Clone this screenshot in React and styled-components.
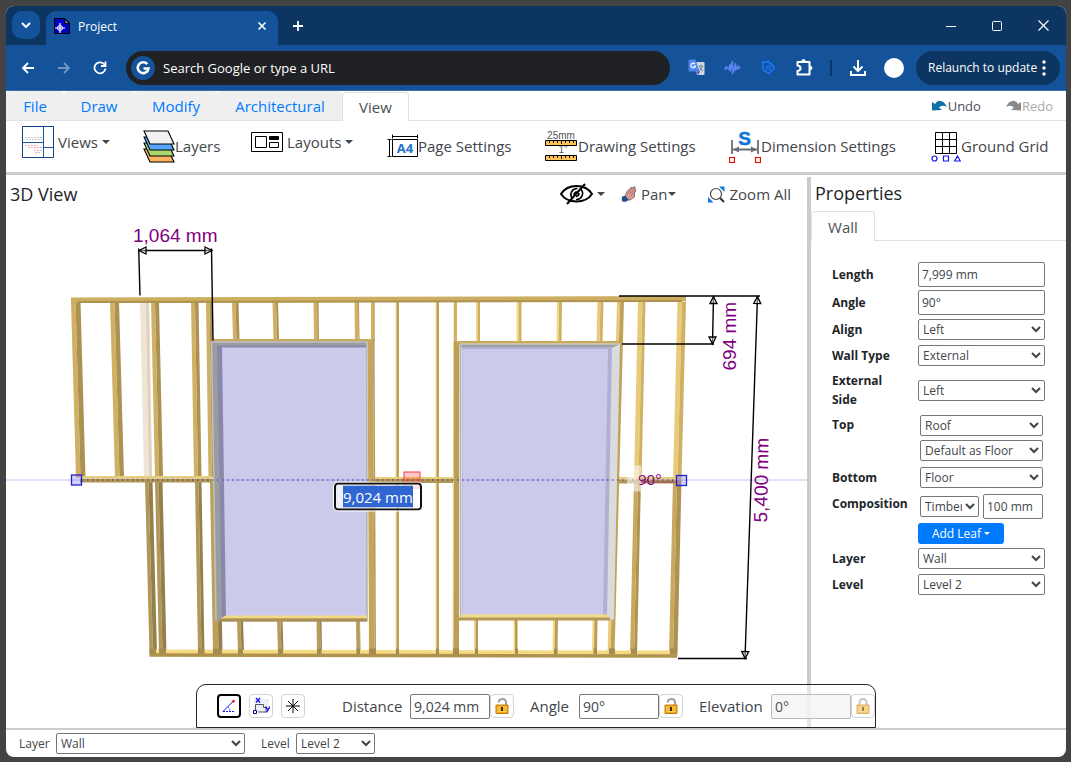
import React from 'react';
import styled, { createGlobalStyle } from 'styled-components';

const Global = createGlobalStyle`
  * { box-sizing: border-box; }
  html, body { margin: 0; background: #434343; }
  body, button, input, select {
    font-family: "Open Sans", "Noto Sans", sans-serif;
    color: #212529;
  }
  button { cursor: pointer; }
  svg { display: block; flex: none; }
`;

/* ---------- window ---------- */

const Page = styled.div`
  min-height: 100vh;
  padding: 6px 5px 5px 6px;
  display: flex;
`;
const Window = styled.div`
  flex: 1;
  min-width: 0;
  display: flex;
  flex-direction: column;
  background: #fff;
  border-radius: 8px;
  overflow: hidden;
`;
const TitleBar = styled.header`
  display: flex;
  align-items: stretch;
  height: 39px;
  background: #0c3561;
`;
const PlainButton = styled.button`
  display: flex;
  align-items: center;
  justify-content: center;
  padding: 0;
  border: 0;
  background: none;
  color: ${(p) => p.$color || '#fff'};
`;
const TabSearch = styled(PlainButton)`
  width: 28px;
  height: 28px;
  margin: 5px 6px 0 6px;
  border-radius: 10px;
  background: #14539a;
`;
const BrowserTab = styled.div`
  display: flex;
  align-items: center;
  width: 232px;
  margin-top: 5px;
  padding: 0 8px 4px;
  gap: 8px;
  border-radius: 10px 10px 0 0;
  background: #14539a;
  color: #fff;
  font-size: 12px;
`;
const TabTitle = styled.span`
  flex: 1;
`;
const WindowButtons = styled.div`
  display: flex;
  margin-left: auto;
  button { width: 46px; }
`;
const AddressRow = styled.div`
  display: flex;
  align-items: center;
  height: 46px;
  padding: 0 6px 0 4px;
  background: #14539a;
  border-bottom: 1px solid #3a6ea9;
`;
const NavButton = styled(PlainButton)`
  width: 36px;
  height: 34px;
`;
const NewTab = styled(PlainButton)`
  width: 40px;
`;
const Omnibox = styled.label`
  display: flex;
  align-items: center;
  flex: 1;
  height: 34px;
  margin: 0 8px 0 8px;
  padding: 0 5px;
  gap: 8px;
  border-radius: 17px;
  background: #202124;
`;
const OmniInput = styled.input`
  flex: 1;
  min-width: 0;
  padding: 0;
  border: 0;
  outline: 0;
  background: none;
  color: #fff;
  font-size: 13px;
  &::placeholder { color: #fff; opacity: 1; }
`;
const Divider = styled.span`
  width: 2px;
  height: 16px;
  margin: 0 8px;
  background: #0c3561;
`;
const Avatar = styled.button`
  width: 20px;
  height: 20px;
  margin: 0 12px 0 8px;
  padding: 0;
  border: 0;
  border-radius: 50%;
  background: #fff;
`;
const Relaunch = styled.button`
  display: flex;
  align-items: center;
  justify-content: space-between;
  width: 144px;
  height: 34px;
  padding: 0 14px 0 12px;
  border: 0;
  border-radius: 17px;
  background: #0c3561;
  color: #fff;
  font-size: 12px;
  white-space: nowrap;
`;

/* ---------- application menus ---------- */

const MenuTabs = styled.nav`
  display: flex;
  height: 30px;
  border-bottom: 1px solid #dee2e6;
`;
const MenuTab = styled.a`
  display: flex;
  align-items: center;
  justify-content: center;
  width: ${(p) => p.$w}px;
  height: ${(p) => (p.$active ? 29 : 29)}px;
  height: 29px;
  margin-top: ${(p) => (p.$active ? 1 : 0)}px;
  border: ${(p) => (p.$active ? '1px solid #dee2e6' : '0')};
  border-bottom: 0;
  border-radius: 4px 4px 0 0;
  background: ${(p) => (p.$active ? '#fff' : '#efefef')};
  color: ${(p) => (p.$active ? '#495057' : '#007bff')};
  font-size: 15px;
  text-decoration: none;
`;
const History = styled.div`
  display: flex;
  align-items: center;
  gap: 25px;
  margin-left: auto;
  padding-right: 13px;
`;
const HistoryButton = styled(PlainButton)`
  gap: 1px;
  color: #495057;
  font-size: 13px;
  &:disabled { color: #aaa; }
`;
const Ribbon = styled.div`
  display: flex;
  gap: 32px;
  height: 54px;
  padding: 0 16px;
  border-bottom: 3px solid #ccc;
`;
const RibbonButton = styled(PlainButton)`
  justify-content: flex-start;
  width: ${(p) => p.$w}px;
  height: ${(p) => (p.$menu ? 42 : 50)}px;
  gap: ${(p) => p.$gap || 0}px;
  color: #41464b;
  font-size: 15px;
  white-space: nowrap;
`;
const Caret = styled.span`
  display: inline-block;
  margin-left: ${(p) => p.$gap || 0}px;
  border-top: ${(p) => p.$size || 4}px solid currentColor;
  border-left: ${(p) => p.$size || 4}px solid transparent;
  border-right: ${(p) => p.$size || 4}px solid transparent;
`;

/* ---------- workspace ---------- */

const Workspace = styled.main`
  position: relative;
  flex: 1;
  display: grid;
  grid-template-columns: minmax(0, 1fr) 259px;
  padding-top: 2px;
  border-bottom: 2px solid #ccc;
`;
const ViewPane = styled.section`
  display: flex;
  flex-direction: column;
  min-width: 0;
`;
const ViewBar = styled.div`
  display: flex;
  align-items: center;
  height: 34px;
  padding: 0 16px 0 4px;
`;
const Heading = styled.h2`
  margin: 0;
  font-size: 18px;
  font-weight: 500;
  line-height: 32px;
`;
const ViewTools = styled.div`
  display: flex;
  gap: 16px;
  margin-left: auto;
`;
const ViewButton = styled(PlainButton)`
  gap: ${(p) => p.$gap || 4}px;
  color: #41464b;
  font-size: 15px;
  &:last-child { margin-left: 16px; }
`;
const Canvas = styled.svg`
  flex: 1 1 516px;
  width: 100%;
  min-height: 0;
`;
const InlineValue = styled.input`
  display: block;
  width: 88px;
  height: 28px;
  margin: 1px;
  padding: 1px 7px;
  border: 2px solid #101010;
  border-radius: 4px;
  outline: 1px solid #fff;
  background: linear-gradient(#2f66d0, #2f66d0) content-box, rgba(255, 255, 255, 0.7);
  color: #fff;
  font-size: 15px;
`;

const Properties = styled.aside`
  border-left: 4px solid #ccc;
`;
const PanelHeading = styled(Heading)`
  padding: 0 0 2px 4px;
`;
const PanelTabs = styled.div`
  display: flex;
  height: 30px;
  border-bottom: 1px solid #dee2e6;
`;
const PanelTab = styled.button`
  width: 64px;
  height: 30px;
  padding: 0;
  border: 1px solid #dee2e6;
  border-bottom: 0;
  border-radius: 4px 4px 0 0;
  background: #fff;
  color: #495057;
  font-size: 15px;
`;
const Form = styled.form`
  display: flex;
  flex-direction: column;
  gap: 3px;
  padding: 21px 21px 0 21px;
`;
const Row = styled.div`
  display: grid;
  grid-template-columns: 86px minmax(0, 1fr);
  align-items: ${(p) => (p.$top ? 'start' : 'center')};
  padding: ${(p) => p.$pad || '1px 0'};
`;
const Label = styled.label`
  color: #212529;
  font-size: 12px;
  font-weight: 700;
  line-height: 19px;
`;
const Stack = styled.div`
  display: flex;
  flex-direction: column;
  gap: 4px;
  padding: 0 2px;
`;
const Pair = styled.div`
  display: grid;
  grid-template-columns: 59px 60px;
  align-items: center;
  gap: 4px;
`;
const TextBox = styled.input`
  width: ${(p) => (p.$w ? `${p.$w}px` : '100%')};
  height: 25px;
  padding: 0 3px;
  border: 1px solid #767676;
  border-radius: 2px;
  background: #fff;
  color: #41464b;
  font-size: ${(p) => p.$size || 12}px;
  &:disabled { border-color: #bbb; background: #f4f4f4cc; color: #555; }
`;
const Select = styled.select`
  width: ${(p) => (p.$w ? `${p.$w}px` : '100%')};
  height: 21px;
  padding: 0;
  border: 1px solid #767676;
  border-radius: 2px;
  background-color: #fff;
  color: #41464b;
  font-size: 12px;
`;
const AddLeaf = styled.button`
  display: flex;
  align-items: center;
  justify-content: center;
  width: 86px;
  height: 21px;
  margin-left: -2px;
  padding: 0;
  border: 0;
  border-radius: 3px;
  background: #007bff;
  color: #fff;
  font-size: 12px;
`;

const InputPanel = styled.div`
  position: absolute;
  left: 190px;
  bottom: 0;
  display: flex;
  align-items: center;
  height: 44px;
  padding: 0 0 0 20px;
  border: 1px solid #212529;
  border-radius: 10px 10px 0 0;
  background: rgba(255, 255, 255, 0.5);
`;
const ModeGroup = styled.div`
  display: flex;
  gap: 8px;
  margin-right: 37px;
`;
const IconButton = styled(PlainButton)`
  width: 24px;
  height: 24px;
  border: ${(p) => (p.$active ? '2px solid #000' : '1px solid #d3d3d3')};
  border-radius: 4px;
  background: #fff;
`;
const Field = styled.div`
  display: flex;
  align-items: center;
  width: ${(p) => p.$w}px;
  margin-left: ${(p) => p.$gap || 0}px;
  font-size: 15px;
  color: #41464b;
  label { flex: 1; }
  svg { opacity: ${(p) => (p.$off ? 0.6 : 1)}; }
`;
const StatusBar = styled.footer`
  display: flex;
  align-items: center;
  height: 27px;
  padding: 0 13px;
  color: #41464b;
  font-size: 12px;
  label { width: 37px; }
  label + select { margin-right: 16px; }
  select + label { width: 35px; }
`;

/* ---------- icons ---------- */

const Stroke = ({ w, h, d, sw = 2, color = 'currentColor' }) => (
  <svg width={w} height={h} viewBox={`0 0 ${w} ${h}`} fill="none" stroke={color} strokeWidth={sw}>
    <path d={d} />
  </svg>
);

const FavIcon = () => (
  <svg width="16" height="16" viewBox="0 0 16 16">
    <path d="M.5.5h10.500l4.500 4.500v10.500H.5z" fill="#0202c8" stroke="#000" />
    <path d="M11 1v4.500h4z" fill="#8c8c8c" stroke="#000" strokeWidth=".8" />
    <circle cx="6" cy="10" r="2.500" fill="none" stroke="#fff" />
    <path d="M6 5v10M1 10h10" stroke="#fff" strokeWidth="1.200" />
  </svg>
);
const GoogleMark = () => (
  <svg width="24" height="24" viewBox="0 0 24 24">
    <circle cx="12" cy="12" r="12" fill="#14539a" />
    <path d="M16.300 8.200A5.400 5.400 0 1 0 17.500 12.500H12.500" fill="none" stroke="#fff" strokeWidth="2.600" />
  </svg>
);
const TranslateIcon = () => (
  <svg width="17" height="17" viewBox="0 0 17 17">
    <path d="M7 3h8.500q1 0 1 1v11q0 1-1 1H9z" fill="#cfd6df" />
    <path d="M11 7h4M13 6v1M14.500 7q-1 4-4 5M11.500 8q1 3 3.500 4" stroke="#71808f" fill="none" />
    <path d="M1.500.5h6l4 12h-10q-1 0-1-1v-10q0-1 1-1z" fill="#4f86ee" />
    <path d="M9 12.500h3l-2 3.500z" fill="#4338b8" />
    <path d="M7 5a2.300 2.300 0 1 0 .5 2H5.400" fill="none" stroke="#fff" strokeWidth="1.200" />
  </svg>
);
const WaveIcon = () => (
  <svg width="17" height="15" viewBox="0 0 17 15" fill="none" stroke="#5b82ee" strokeWidth="1.500" strokeLinecap="round" strokeLinejoin="round">
    <path d="M1 9.500Q2 5 3 7.500T5 8.500L6 4.500V11L8.500 1.500V13.500L11.500 3.500V10.500L14 5.500V9L16 7" />
  </svg>
);
const TagIcon = () => (
  <svg width="15" height="15" viewBox="0 0 15 15" fill="none" stroke="#1a73f0">
    <path d="M1.500 2.500L7.500 1.500 13.500 7.500 8 13.500 2.500 10z" strokeWidth="1.800" strokeLinejoin="round" />
    <circle cx="7.500" cy="7.500" r="1.800" strokeWidth="1.400" />
  </svg>
);
const PuzzleIcon = () => (
  <svg width="17" height="17" viewBox="0 0 17 17">
    <path d="M1.500 3H13.500V15.500H1.500V12Q4.500 11.500 4.500 9.200T1.500 6.500Z" fill="none" stroke="#fff" strokeWidth="2" strokeLinejoin="round" />
    <path d="M5.500 3a2 2.500 0 0 1 4 0zM13.500 7a2.500 2 0 0 1 0 4z" fill="#fff" stroke="#fff" />
  </svg>
);
const ViewsIcon = () => (
  <svg width="32" height="32" viewBox="0 0 32 32" fill="none">
    <path d="M.5.5h31v31H.5zM21.500 0v32M0 16.500h21M21.500 21.500H32" stroke="#1c57a5" />
    <path d="M.5.5h31v31H.5z" stroke="#0b2f6b" strokeDasharray="1 1" />
    <path d="M3 11.500h17M4 13.500h16" stroke="#c5c9b8" strokeDasharray="2 1" />
    <path d="M3 19.500h13M6 21.500h14M12 24.500h8M13 26.500h6" stroke="#f2aab5" strokeDasharray="2 1" />
  </svg>
);
const LayersIcon = () => (
  <svg width="32" height="33" viewBox="0 0 32 33" stroke="#000" strokeWidth="1.100">
    {[['#fdb35f', 18], ['#a9d66e', 12], ['#55a5f8', 6], ['#f0f0f0', 0]].map(([c, y]) => (
      <path key={c} d={`M1 ${y + 1}h24l6 13H7z`} fill={c} />
    ))}
  </svg>
);
const LayoutsIcon = () => (
  <svg width="32" height="20" viewBox="0 0 32 20" fill="none" stroke="#000">
    <path d="M.5.5h31v19H.5zM4.500 4.500h11v11h-11zM18.500 10.500h9v5h-9z" />
    <path d="M18.500 4.500h9v3h-9z" fill="#000" />
  </svg>
);
const PageIcon = () => (
  <svg width="31" height="24" viewBox="0 0 31 24">
    <path d="M5.500 5.500h25v17h-25z" fill="#fff" stroke="#000" />
    <path d="M5 2.500h26M5.500.5v4M30.500.5v4M2.500 5v18M.5 5.500h4M.5 22.500h4" stroke="#000" />
    <text x="18" y="18.500" textAnchor="middle" fontSize="13" fontWeight="700" fill="#1b73d0" fontFamily="Open Sans, sans-serif">A4</text>
  </svg>
);
const Ruler = ({ y }) => (
  <g stroke="#000">
    <path d={`M.5 ${y + 0.5}h31v5H.5z`} fill="#fdc558" />
    <path d={`M4.500 ${y}v3M8.500 ${y}v3M12.500 ${y}v3M16.500 ${y}v4M20.500 ${y}v3M24.500 ${y}v3M28.500 ${y}v3`} strokeWidth=".9" />
  </g>
);
const RulersIcon = () => (
  <svg width="33" height="30" viewBox="0 0 33 30">
    <g fontFamily="Liberation Sans, sans-serif" fontSize="10" fill="#555" textAnchor="middle">
      <text x="16" y="8">25mm</text>
      <text x="18" y="22">1"</text>
    </g>
    <Ruler y={9} />
    <Ruler y={24} />
  </svg>
);
const DimensionIcon = () => (
  <svg width="32" height="39" viewBox="0 -3 32 39">
    <text x="15.500" y="15" textAnchor="middle" fontSize="19" fontWeight="700" fill="#0b74d6" stroke="#0b74d6" strokeWidth=".4" fontFamily="Liberation Sans, sans-serif">S</text>
    <path d="M3 10v14M29 10v14M4 19.500h24" stroke="#6b6c73" strokeWidth="1.800" />
    <path d="M4 19.500l6-3v6zM28 19.500l-6-3v6z" fill="#6b6c73" />
    <path d="M.5 27.500h5v5h-5zM26.500 27.500h5v5h-5z" fill="none" stroke="#f00" strokeWidth="1.200" />
  </svg>
);
const GridIcon = () => (
  <svg width="30" height="31" viewBox="0 0 30 31" fill="none">
    <path d="M4.500 1.500h21v21h-21zM11.500 1v21M18.500 1v21M4 8.500h21M4 15.500h21" stroke="#000" />
    <g stroke="#1414f0" strokeWidth="1.200">
      <circle cx="3.500" cy="27.500" r="2.500" />
      <path d="M12.500 25h5v5h-5zM26.500 25l2.800 5h-5.600z" />
    </g>
  </svg>
);
const TurnIcon = ({ color, flip }) => (
  <svg width="15" height="11" viewBox="0 0 15 11">
    <path transform={flip ? 'translate(15 0) scale(-1 1)' : undefined} d="M0 2v8.500l10-.5-3-2.500q3-3 8-.5Q12 .5 7 .8 4.500 1.200 3 4z" fill={color} />
  </svg>
);
const EyeIcon = () => (
  <svg width="33" height="22" viewBox="0 0 33 22" fill="none" stroke="#000" strokeWidth="2">
    <path d="M1 11q5-8 15.500-8T32 11q-5 7.500-15.500 7.500T1 11z" />
    <path d="M12.500 15.500a6 6 0 0 1 5-10M21 6.500a6 6 0 0 1-5 10M14 12q0-3 3-3M19 10q0 3-3 3.500" strokeWidth="1.600" />
    <path d="M7 21L25 1" />
  </svg>
);
const HandIcon = () => (
  <svg width="16" height="16" viewBox="0 0 16 16">
    <path d="M4 10L6 5.500 10.500 1l.8.8L14 .8v2l1 1-1.500 3.500V11L9 14H5.500z" fill="#d69a94" stroke="#80514e" strokeWidth=".8" />
    <path d="M7 7l4-5M9 8l4.500-5.500M10 10l4-5" stroke="#8e5c5a" strokeWidth=".6" />
    <path d="M1 10.500l3.500-.8 3 4-2.500 2H1.500q-1.500-2-.5-5.200z" fill="#274f88" />
  </svg>
);
const ZoomIcon = () => (
  <svg width="17" height="17" viewBox="0 0 17 17">
    <path d="M11 .5h5.500V6zM0 11v5.500h5.500z" fill="#1178e0" />
    <circle cx="8" cy="8" r="5.500" fill="#fff" stroke="#444" strokeWidth="1.200" />
    <path d="M12 12l4 4" stroke="#333" strokeWidth="2.200" />
  </svg>
);
const AngleIcon = () => (
  <svg width="14" height="14" viewBox="0 0 14 14" fill="none">
    <path d="M1 12.500L11.500 2" stroke="#1414f0" />
    <path d="M1 12.500h12" stroke="#1414f0" strokeDasharray="2 1" />
    <path d="M6 8q2 1.500 2 4.500" stroke="#1414f0" strokeDasharray="1.500 1" />
    <path d="M10 2l2-1.500 1 2-2 1.500z" fill="#f00" />
  </svg>
);
const XYIcon = () => (
  <svg width="18" height="18" viewBox="0 0 18 18" fill="none">
    <path d="M2 2h15v13H2z" fill="#eeeff3" />
    <path d="M3.500 14V7.500h8v3h2.500V15H6" stroke="#555" />
    <path d="M1.500 13.500h3v3h-3z" stroke="#000090" fill="#fff" />
    <path d="M4 1l4 4.500M8 1L4 5.500M13.500 9.500l2 3M18 9.500l-3.500 6" stroke="#1c1cf0" strokeWidth="1.400" />
  </svg>
);
const LockIcon = ({ open }) => (
  <svg width="14" height="16" viewBox="0 0 14 16">
    <path d={open ? 'M3.500 4.500q.5-3.500 4-3.500t3.500 3.500V8' : 'M3.500 8V5q0-4 3.500-4t3.500 4v3'} fill="none" stroke="#9aa1a8" strokeWidth="2" />
    <path d="M1 7h12v8.500H1z" fill="#f2a81d" stroke="#c27a0d" />
    <path d="M2 9.500h10M2 11.500h10M2 13.500h10" stroke="#ffd45c" strokeWidth=".8" />
    <path d="M6 9h2v4H6z" fill="#3c2a0a" />
  </svg>
);

/* ---------- timber frame drawing ---------- */

const WOOD = '#d0b062';
const WOOD_DARK = '#ab9152';
const WOOD_LIGHT = '#f4db83';
const WOOD_WARM = '#e9ca78';

// [top x, bottom x, top y, bottom y, left face width, right face width, left colour, right colour]
const studs = [
  [71, 76, 302, 478, 4.5, 5, WOOD, WOOD_DARK],
  [110, 115, 302, 478, 4.5, 4.5, WOOD, WOOD_DARK],
  [151, 155, 302, 478, 4, 4, WOOD, WOOD_DARK],
  [191, 194, 302, 478, 4, 3.5, WOOD, WOOD_DARK],
  [206, 208.5, 302, 478, 3.5, 2.5, WOOD, WOOD_DARK],
  [145, 149.5, 482, 654, 3.5, 4, '#b3975a', '#94804a'],
  [155, 159, 482, 654, 3.5, 4, '#b3975a', '#94804a'],
  [195, 198, 482, 654, 3.5, 3, '#b3975a', '#94804a'],
  [210, 213, 482, 654, 5.5, 4, '#bd9f58', '#94804a'],
  [232, 233, 302, 341, 3.5, 3, WOOD, WOOD_DARK],
  [272.5, 273.5, 302, 341, 3.5, 2, WOOD, WOOD_DARK],
  [313.5, 314, 302, 341, 3.5, 1.5, WOOD, WOOD_DARK],
  [354.5, 355, 302, 341, 3.5, 1, WOOD, WOOD_DARK],
  [237, 238, 621, 653, 3.5, 2.5, '#b89b58', '#94804a'],
  [277, 278, 621, 653, 3.5, 2, '#b89b58', '#94804a'],
  [316.5, 317, 621, 653, 3.5, 1.5, '#b89b58', '#94804a'],
  [356, 356.5, 621, 653, 3.5, 0.5, '#b89b58', '#94804a'],
  [371, 371, 302, 342, 3.5, 0.5, WOOD, WOOD_DARK],
  [367.5, 369, 340, 656, 5.5, 1.5, '#c4a55c', '#b69859'],
  [395.5, 395.5, 302, 654, 1, 2.5, WOOD_LIGHT, '#bc9f58'],
  [435.5, 435.5, 302, 654, 1, 2.5, WOOD_LIGHT, '#bc9f58'],
  [453.5, 453.5, 302, 343, 0.5, 3, WOOD_LIGHT, WOOD],
  [453, 452.5, 342, 656, 1, 5.5, WOOD_LIGHT, '#bb9e58'],
  [476, 476, 302, 343, 1.5, 2.5, WOOD_LIGHT, WOOD],
  [516.5, 516.5, 302, 343, 2, 3, WOOD_LIGHT, WOOD],
  [557, 556.5, 302, 343, 2, 3, WOOD_LIGHT, WOOD],
  [597.5, 596.5, 302, 343, 3, 3, WOOD_WARM, WOOD],
  [474, 474, 619, 653, 1.5, 2.5, WOOD_LIGHT, '#b89b58'],
  [513.5, 513.5, 619, 653, 1.5, 2.5, WOOD_LIGHT, '#b89b58'],
  [553, 552.5, 619, 653, 2, 3, WOOD_LIGHT, '#b89b58'],
  [592.5, 592, 619, 653, 2, 3, WOOD_LIGHT, '#b89b58'],
  [617, 607.5, 302, 656, 3, 4, WOOD_WARM, '#bfa15a'],
  [638, 634, 302, 480, 4.5, 3, WOOD_WARM, WOOD],
  [634, 630, 480, 656, 4, 3, '#c7a85d', '#ad9250'],
  [677.5, 673, 302, 480, 4.5, 4, WOOD_WARM, WOOD],
  [673, 669, 480, 656, 4, 4.5, '#c7a85d', '#ad9250'],
];

// Stud ends that stand on the bottom plate: [left x, right x]
const studFeet = [
  [149.5, 156], [159, 166], [198, 204.5], [213, 222], [238, 243], [278, 283], [317, 321.5],
  [356.5, 360], [369, 376], [396, 399], [436, 439], [453, 459], [475, 478], [515, 518],
  [554, 557.5], [593.5, 597], [609, 615], [631, 637], [670, 677],
];

const Stud = ({ data: [x1, x2, y1, y2, a, b, left, right] }) => (
  <g>
    <polygon points={`${x1},${y1} ${x1 + a},${y1} ${x2 + a},${y2} ${x2},${y2}`} fill={left} />
    <polygon points={`${x1 + a},${y1} ${x1 + a + b},${y1} ${x2 + a + b},${y2} ${x2 + a},${y2}`} fill={right} />
  </g>
);

const Arrow = ({ x, y, r }) => (
  <path transform={`translate(${x} ${y}) rotate(${r})`} d="M0 0l7-3.500v7z" fill="#fff" fillOpacity=".4" stroke="#000" strokeWidth="1.300" />
);

const FrameDrawing = () => (
  <Canvas viewBox="6 212 801 516" role="img" aria-label="Timber frame wall">
    <path d="M6 480.500H807" stroke="#c2c4f7" />
    <polygon points="140,302 149,302 152,478 144,478" fill="#eee5d6" />
    <polygon points="146,302 149,302 152,478 149,478" fill="#dfd3bc" />
    {studs.map((s, i) => <Stud key={i} data={s} />)}

    <polygon points="71,298 686,296.500 686,301.500 71,303.500" fill="#cdad60" />
    <polygon points="78,301.500 682,300.500 682,302.500 78,303.500" fill="#ad9250" />
    <path d="M80 477.500H212M375 478.500H453M619 478.500H674" stroke="#e8cd7d" strokeWidth="2" />
    <path d="M80 481H212M375 481.500H453M619 482H674" stroke="#b29654" strokeWidth="4" />
    <polygon points="151,650 670,651 676,655 150,655" fill={WOOD_LIGHT} />
    <path d="M149.500 655.500L677 656.500" stroke="#b0924d" strokeWidth="3.500" />
    {studFeet.map(([a, b]) => (
      <rect key={a} x={a} y="649" width={b - a} height="5.500" fill="#a68c4e" />
    ))}
    <path d="M212 341H372M458 343H619" stroke="#c9aa5e" strokeWidth="3" />

    <polygon points="211,342 367,342 367.500,622 216,622" fill="#9b9ca0" />
    <polygon points="217,346 366,346 366,618 222,618" fill="#8988ac" />
    <polygon points="222,348 366,348 366,617 226,617" fill="#cbcaea" />
    <path d="M211 342.500H367M211.500 342L216 621M367 342V621" stroke="#bfc0c2" strokeWidth="1.500" fill="none" />
    <polygon points="226,616 367,616 367,619 220,619" fill={WOOD_LIGHT} />
    <path d="M219 620.500H367" stroke="#ad9050" strokeWidth="3" />

    <polygon points="460,344 620,344 614,620 459.500,620" fill="#dadbdd" />
    <polygon points="461,345 619,345 613,348 462,349.500" fill="#9fa0a2" />
    <polygon points="462,347.500 612,347.500 607,616 462,616" fill="#b1b0d4" />
    <polygon points="462.500,349.500 608,349.500 603,616 462.500,616" fill="#cbcaea" />
    <path d="M460.500 344V617" stroke="#aeb0b8" />
    <polygon points="461,615 607,615 611,618 461,618" fill={WOOD_LIGHT} />
    <path d="M459 619.500H610" stroke="#b59853" strokeWidth="3" />

    <path d="M218 480.500H367M462 480.500H611" stroke="#a9a9ec" />
    <path d="M82 480.500H676" stroke="#34307a" strokeDasharray="1.500 3.500" />
    <rect x="627" y="466" width="14" height="26" fill="#fff" fillOpacity=".55" />
    <rect x="404" y="472.500" width="16" height="16" fill="#f22" fillOpacity=".25" stroke="#f04040" />
    <path d="M641 482.500H677" stroke="#800080" strokeOpacity=".55" />
    <g fill="#8080ff" fillOpacity=".35" stroke="#2020d0" strokeWidth="1.300">
      <rect x="71.500" y="475.500" width="10" height="10" />
      <rect x="676.500" y="476" width="10" height="10" />
    </g>

    <g fill="none" stroke="#000" strokeWidth="1.400">
      <path d="M139 251H212M138.700 249L140 296M211.500 249L213 341" />
      <path d="M619 296.500H760M622 344.500H714M713.500 297L712.500 344M757.500 297L745 659M678 659H747" />
    </g>
    <Arrow x={139} y={251} r={0} />
    <Arrow x={212} y={251} r={180} />
    <Arrow x={713.5} y={297} r={90} />
    <Arrow x={712.5} y={344.5} r={-90} />
    <Arrow x={757.5} y={297} r={92} />
    <Arrow x={745} y={659} r={-88} />
    <g fill="#800080" fontFamily="Liberation Sans, Arial, sans-serif" fontSize="19">
      <text x="133" y="242">1,064 mm</text>
      <text transform="translate(736 371) rotate(-90)">694 mm</text>
      <text transform="translate(767 523) rotate(-89)">5,400 mm</text>
    </g>
    <text x="638" y="485" fill="#800080" fontFamily="Open Sans, sans-serif" fontSize="15">90°</text>
    <foreignObject x="333" y="482" width="92" height="32">
      <InlineValue aria-label="Distance on drawing" defaultValue="9,024 mm" />
    </foreignObject>
  </Canvas>
);

/* ---------- form helpers ---------- */

const Choice = ({ id, value, ...rest }) => (
  <Select id={id} defaultValue={value} {...rest}>
    <option>{value}</option>
  </Select>
);

const SelectRow = ({ id, label, value, inset }) => (
  <Row>
    <Label htmlFor={id}>{label}</Label>
    {inset ? <Stack><Choice id={id} value={value} /></Stack> : <Choice id={id} value={value} />}
  </Row>
);

const ValueField = ({ id, label, value, w, gap, off }) => (
  <Field $w={w} $gap={gap} $off={off}>
    <label htmlFor={id}>{label}</label>
    <TextBox id={id} $w={80} $size={14} defaultValue={value} disabled={off} />
    <IconButton type="button" aria-label={`Lock ${label}`} disabled={off}><LockIcon open={!off} /></IconButton>
  </Field>
);

export default function App() {
  return (
    <Page>
      <Global />
      <Window>
        <TitleBar>
          <TabSearch aria-label="Search tabs"><Stroke w={10} h={6} d="M1 1l4 4 4-4" /></TabSearch>
          <BrowserTab>
            <FavIcon />
            <TabTitle>Project</TabTitle>
            <PlainButton aria-label="Close tab"><Stroke w={16} h={10} d="M4.500 1.500l7 7M11.500 1.500l-7 7" sw={1.6} /></PlainButton>
          </BrowserTab>
          <NewTab aria-label="New tab"><Stroke w={12} h={12} d="M6 1v10M1 6h10" sw={1.8} /></NewTab>
          <WindowButtons>
            <PlainButton aria-label="Minimize"><Stroke w={10} h={10} d="M0 5.500h10" sw={1} /></PlainButton>
            <PlainButton aria-label="Maximize"><Stroke w={10} h={10} d="M1.500.5h7q1 0 1 1v7q0 1-1 1h-7q-1 0-1-1v-7q0-1 1-1z" sw={1} /></PlainButton>
            <PlainButton aria-label="Close"><Stroke w={11} h={11} d="M.5.5l10 10M10.500.5l-10 10" sw={1.2} /></PlainButton>
          </WindowButtons>
        </TitleBar>

        <AddressRow>
          <NavButton aria-label="Back"><Stroke w={14} h={12} d="M13 6H2M7 1L2 6l5 5" sw={1.8} /></NavButton>
          <NavButton aria-label="Forward" $color="#6f98c6"><Stroke w={14} h={12} d="M1 6h11M7 1l5 5-5 5" sw={1.8} /></NavButton>
          <NavButton aria-label="Reload"><Stroke w={14} h={14} d="M12.500 7.500A5.500 5.500 0 1 1 11 3l1.500 2M12.500.5V5H8" sw={1.8} /></NavButton>
          <Omnibox>
            <GoogleMark />
            <OmniInput aria-label="Address" placeholder="Search Google or type a URL" />
          </Omnibox>
          <NavButton aria-label="Translate"><TranslateIcon /></NavButton>
          <NavButton aria-label="Voice"><WaveIcon /></NavButton>
          <NavButton aria-label="Tag"><TagIcon /></NavButton>
          <NavButton aria-label="Extensions"><PuzzleIcon /></NavButton>
          <Divider />
          <NavButton aria-label="Downloads"><Stroke w={16} h={16} d="M8 0v11M3.500 6.500L8 11l4.500-4.500M1 11v4h14v-4" /></NavButton>
          <Avatar aria-label="Profile" />
          <Relaunch>
            Relaunch to update
            <svg width="4" height="16" viewBox="0 0 4 16" fill="#fff">
              <circle cx="2" cy="2" r="1.700" /><circle cx="2" cy="8" r="1.700" /><circle cx="2" cy="14" r="1.700" />
            </svg>
          </Relaunch>
        </AddressRow>

        <MenuTabs>
          <MenuTab href="#file" $w={58}>File</MenuTab>
          <MenuTab href="#draw" $w={70}>Draw</MenuTab>
          <MenuTab href="#modify" $w={84}>Modify</MenuTab>
          <MenuTab href="#architectural" $w={124}>Architectural</MenuTab>
          <MenuTab href="#view" $w={67} $active>View</MenuTab>
          <History>
            <HistoryButton><TurnIcon color="#1272a8" />Undo</HistoryButton>
            <HistoryButton disabled><TurnIcon color="#8a8a8a" flip />Redo</HistoryButton>
          </History>
        </MenuTabs>

        <Ribbon>
          <RibbonButton $w={89} $menu $gap={4}><ViewsIcon /><span>Views</span><Caret /></RibbonButton>
          <RibbonButton $w={76}><LayersIcon />Layers</RibbonButton>
          <RibbonButton $w={104} $menu $gap={4}><LayoutsIcon /><span>Layouts</span><Caret /></RibbonButton>
          <RibbonButton $w={126}><PageIcon />Page Settings</RibbonButton>
          <RibbonButton $w={152}><RulersIcon />Drawing Settings</RibbonButton>
          <RibbonButton $w={170}><DimensionIcon />Dimension Settings</RibbonButton>
          <RibbonButton $w={118}><GridIcon />Ground Grid</RibbonButton>
        </Ribbon>

        <Workspace>
          <ViewPane>
            <ViewBar>
              <Heading>3D View</Heading>
              <ViewTools>
                <ViewButton aria-label="Hidden items"><EyeIcon /><Caret /></ViewButton>
                <ViewButton><HandIcon /><span>Pan</span><Caret $gap={-4} /></ViewButton>
                <ViewButton $gap={5}><ZoomIcon />Zoom All</ViewButton>
              </ViewTools>
            </ViewBar>
            <FrameDrawing />
          </ViewPane>

          <Properties>
            <PanelHeading>Properties</PanelHeading>
            <PanelTabs><PanelTab>Wall</PanelTab></PanelTabs>
            <Form onSubmit={(e) => e.preventDefault()}>
              <Row $pad="0">
                <Label htmlFor="length">Length</Label>
                <TextBox id="length" defaultValue="7,999 mm" />
              </Row>
              <Row $pad="0">
                <Label htmlFor="angle">Angle</Label>
                <TextBox id="angle" defaultValue="90°" />
              </Row>
              <SelectRow id="align" label="Align" value="Left" />
              <SelectRow id="wallType" label="Wall Type" value="External" />
              <SelectRow id="side" label={<>External<br />Side</>} value="Left" />
              <Row $top $pad="2px 0">
                <Label htmlFor="top">Top</Label>
                <Stack>
                  <Choice id="top" value="Roof" />
                  <Choice id="topOffset" value="Default as Floor" aria-label="Top offset" />
                </Stack>
              </Row>
              <SelectRow id="bottom" label="Bottom" value="Floor" inset />
              <Row $top $pad="2px 0 0">
                <Label htmlFor="leaf">Composition</Label>
                <Stack>
                  <Pair>
                    <Choice id="leaf" value="Timber" />
                    <TextBox aria-label="Leaf thickness" defaultValue="100 mm" />
                  </Pair>
                  <AddLeaf type="button">Add Leaf<Caret $gap={3} $size={3} /></AddLeaf>
                </Stack>
              </Row>
              <SelectRow id="layer" label="Layer" value="Wall" />
              <SelectRow id="level" label="Level" value="Level 2" />
            </Form>
          </Properties>

          <InputPanel>
            <ModeGroup>
              <IconButton $active aria-label="Distance and angle"><AngleIcon /></IconButton>
              <IconButton aria-label="X and Y"><XYIcon /></IconButton>
              <IconButton aria-label="Absolute"><Stroke w={14} h={14} d="M7 0v14M0 7h14M2 2l10 10M12 2L2 12" sw={1} color="#000" /></IconButton>
            </ModeGroup>
            <ValueField id="distance" label="Distance" value="9,024 mm" w={172} />
            <ValueField id="direction" label="Angle" value="90°" w={153} gap={16} />
            <ValueField id="elevation" label="Elevation" value="0°" w={176} gap={16} off />
          </InputPanel>
        </Workspace>

        <StatusBar>
          <label htmlFor="currentLayer">Layer</label>
          <Choice id="currentLayer" value="Wall" $w={189} />
          <label htmlFor="currentLevel">Level</label>
          <Choice id="currentLevel" value="Level 2" $w={79} />
        </StatusBar>
      </Window>
    </Page>
  );
}
